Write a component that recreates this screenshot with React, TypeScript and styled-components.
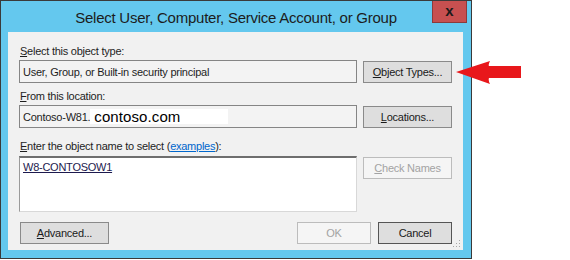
import React from "react";
import styled, { createGlobalStyle } from "styled-components";

const Global = createGlobalStyle`
  html, body { margin: 0; padding: 0; background: #ffffff; }
  body { font-family: "Liberation Sans", Arial, sans-serif; }
`;

const Stage = styled.div`
  position: relative;
  width: 570px;
  height: 260px;
`;

const Window = styled.div`
  box-sizing: border-box;
  width: 472px;
  height: 259px;
  border: 1px solid #3a3a3a;
  background: #64c8ee;
  display: flex;
  flex-direction: column;
`;

const TitleBar = styled.div`
  height: 31px;
  display: grid;
  grid-template-columns: 1fr auto 1fr;
  align-items: center;
`;

const Title = styled.div`
  grid-column: 2;
  font-size: 15px;
  letter-spacing: -0.25px;
  color: #1c1c1c;
  white-space: nowrap;
  padding-top: 2px;
`;

const CloseButton = styled.div`
  grid-column: 3;
  justify-self: end;
  align-self: start;
  box-sizing: border-box;
  width: 35px;
  height: 22px;
  margin-right: 4px;
  background: #c75050;
  border: 1px solid #8d3a3a;
  border-top: none;
  display: flex;
  align-items: center;
  justify-content: center;
  font-size: 15px;
  font-weight: bold;
  color: #1a1a1a;
  line-height: 1;
  padding-bottom: 3px;
`;

const Client = styled.div`
  box-sizing: border-box;
  position: relative;
  width: 455px;
  height: 218px;
  margin-left: 7px;
  background: #f1f1f1;
  padding: 12px 11px 0 11px;
  display: flex;
  flex-direction: column;
  font-size: 11px;
  letter-spacing: -0.25px;
  color: #1e1e1e;
`;

const Label = styled.div<{ $mt?: number }>`
  height: 14px;
  line-height: 14px;
  margin-left: 1px;
  margin-top: ${(p) => p.$mt ?? 0}px;
  white-space: nowrap;
`;

const Row = styled.div<{ $mt: number }>`
  display: flex;
  align-items: flex-start;
  gap: 6px;
  margin-top: ${(p) => p.$mt}px;
`;

const Field = styled.div`
  box-sizing: border-box;
  flex: 1;
  height: 23px;
  border: 1px solid #858585;
  background: #f3f3f3;
  padding-left: 3px;
  display: flex;
  align-items: center;
  white-space: nowrap;
  overflow: hidden;
`;

const Pasted = styled.span`
  display: inline-block;
  box-sizing: border-box;
  width: 138px;
  height: 15px;
  line-height: 15px;
  background: #ffffff;
  padding-left: 4px;
  font-size: 15px;
  letter-spacing: 0.1px;
  color: #000;
`;

const NameBox = styled.div`
  box-sizing: border-box;
  flex: 1;
  height: 56px;
  background: #ffffff;
  border-top: 2px solid #6e6e6e;
  border-left: 1px solid #9a9a9a;
  border-right: 1px solid #d8d8d8;
  border-bottom: 1px solid #d8d8d8;
  padding: 2px 3px;
  line-height: 14px;
`;

const NameEntry = styled.span`
  color: #1d1a4e;
  text-decoration: underline;
`;

const Button = styled.div<{ $w?: number; $disabled?: boolean; $default?: boolean }>`
  box-sizing: border-box;
  width: ${(p) => p.$w ?? 89}px;
  height: 22px;
  margin-top: 1px;
  flex-shrink: 0;
  display: flex;
  align-items: center;
  justify-content: center;
  white-space: nowrap;
  background: ${(p) => (p.$disabled ? "#f5f5f5" : "#dedede")};
  border: 1px solid
    ${(p) => (p.$disabled ? "#bcbcbc" : p.$default ? "#555555" : "#8a8a8a")};
  color: ${(p) => (p.$disabled ? "#a3a3a3" : "#1a1a1a")};
`;

const BottomRow = styled.div`
  display: flex;
  gap: 7px;
  margin-top: 9px;
  padding-left: 1px;
`;

const Spacer = styled.div`
  flex: 1;
`;

const Link = styled.span`
  color: #0066cc;
  text-decoration: underline;
`;

const U = styled.span`
  text-decoration: underline;
`;

const Grip = styled.svg`
  position: absolute;
  right: 2px;
  bottom: 2px;
`;

const Arrow = styled.svg`
  position: absolute;
  left: 455px;
  top: 59px;
`;

export default function App() {
  return (
    <Stage>
      <Global />
      <Window>
        <TitleBar>
          <Title>Select User, Computer, Service Account, or Group</Title>
          <CloseButton>x</CloseButton>
        </TitleBar>
        <Client>
          <Label>
            <U>S</U>elect this object type:
          </Label>
          <Row $mt={2}>
            <Field>User, Group, or Built-in security principal</Field>
            <Button>
              <U>O</U>bject Types...
            </Button>
          </Row>
          <Label $mt={6}>
            <U>F</U>rom this location:
          </Label>
          <Row $mt={2}>
            <Field>
              Contoso-W81.<Pasted>contoso.com</Pasted>
            </Field>
            <Button>
              <U>L</U>ocations...
            </Button>
          </Row>
          <Label $mt={11}>
            <U>E</U>nter the object name to select (<Link>examples</Link>):
          </Label>
          <Row $mt={3}>
            <NameBox>
              <NameEntry>W8-CONTOSOW1</NameEntry>
            </NameBox>
            <Button $disabled>
              <U>C</U>heck Names
            </Button>
          </Row>
          <BottomRow>
            <Button $w={89}>
              <U>A</U>dvanced...
            </Button>
            <Spacer />
            <Button $w={74} $disabled>
              OK
            </Button>
            <Button $w={74} $default>
              Cancel
            </Button>
          </BottomRow>
          <Grip width="8" height="8" viewBox="0 0 8 8">
            <rect x="6" y="0" width="1" height="1" fill="#a8a8a8" />
            <rect x="3" y="3" width="1" height="1" fill="#a8a8a8" />
            <rect x="6" y="3" width="1" height="1" fill="#a8a8a8" />
            <rect x="0" y="6" width="1" height="1" fill="#a8a8a8" />
            <rect x="3" y="6" width="1" height="1" fill="#a8a8a8" />
            <rect x="6" y="6" width="1" height="1" fill="#a8a8a8" />
          </Grip>
        </Client>
      </Window>
      <Arrow width="68" height="28" viewBox="0 0 68 28">
        <path
          d="M1 13 L35 2 Q33 6 34 7 L66 7 L66 19 L34 19 Q33 21 35 25 Z"
          fill="#e8171b"
        />
      </Arrow>
    </Stage>
  );
}
